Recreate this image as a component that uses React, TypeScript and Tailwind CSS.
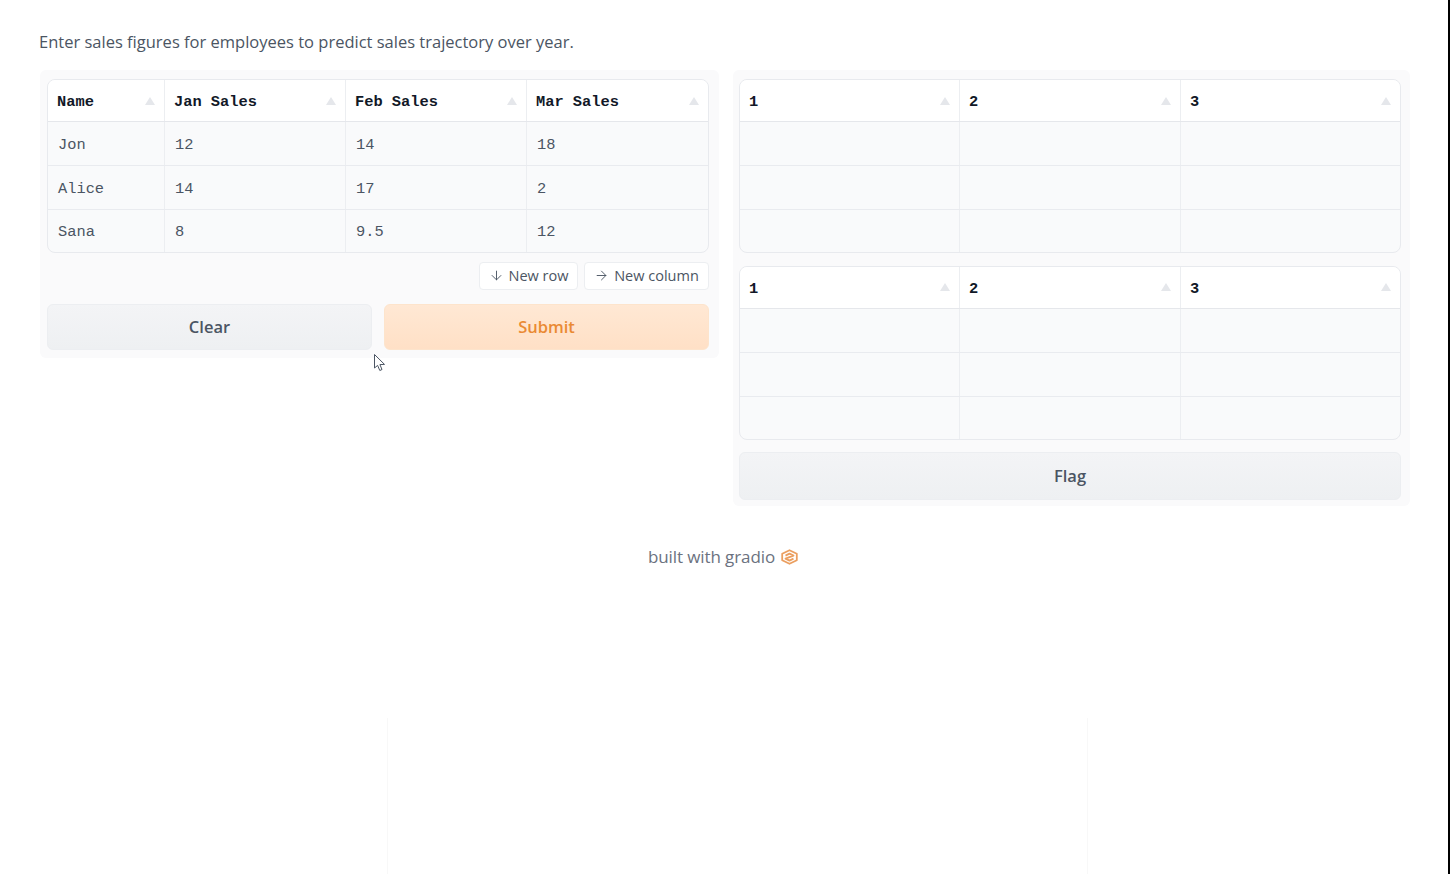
import { ArrowDown, ArrowRight } from 'lucide-react';

const mono = "font-['Liberation_Mono',monospace]";

function SortArrow() {
  return (
    <svg width="10" height="8" viewBox="0 0 10 8" className="shrink-0">
      <path d="M5 0 L10 8 L0 8 Z" fill="#e5e7eb" />
    </svg>
  );
}

function DataTable({ headers, rows, widths }: { headers: string[]; rows: string[][]; widths: string[] }) {
  return (
    <div className={`overflow-hidden rounded-lg border border-[#e8eaee] bg-[#f9fafb] text-[15.36px] ${mono}`}>
      <div className="flex h-[42px] border-b border-[#e5e7eb] bg-white">
        {headers.map((h, i) => (
          <div
            key={i}
            className={`flex items-center justify-between pl-[9px] pr-[9px] font-bold text-[#111827] ${widths[i]} ${i > 0 ? 'border-l border-[#eceef1]' : ''}`}
          >
            <span className="pt-[4px]">{h}</span>
            <SortArrow />
          </div>
        ))}
      </div>
      {rows.map((row, r) => (
        <div key={r} className={`flex h-[43.33px] ${r > 0 ? 'border-t border-[#e9ebef]' : ''}`}>
          {row.map((c, i) => (
            <div
              key={i}
              className={`flex items-center pl-[10px] pt-[4px] text-[#4b5563] ${widths[i]} ${i > 0 ? 'border-l border-[#eceef1]' : ''}`}
            >
              {c}
            </div>
          ))}
        </div>
      ))}
    </div>
  );
}

const emptyRows = [['', '', ''], ['', '', ''], ['', '', '']];
const rightWidths = ['w-[219px]', 'w-[221px]', 'flex-1'];
const leftWidths = ['w-[116px]', 'w-[181px]', 'w-[181px]', 'flex-1'];

export default function App() {
  return (
    <div className="relative flex h-[874px] overflow-hidden bg-white font-['Open_Sans',sans-serif]">
      <div className="flex-1">
        <div className="pl-[39px] pt-[31px] text-[16.5px] leading-[22px] text-[#4b5563]">
          <p>Enter sales figures for employees to predict sales trajectory over year.</p>
        </div>

        <div className="mt-[17px] flex items-start pl-[40px]">
          <div className="w-[679px] rounded-md bg-[#fafafb] pb-[8px] pl-[7px] pr-[10px] pt-[9px]">
            <DataTable
              headers={['Name', 'Jan Sales', 'Feb Sales', 'Mar Sales']}
              rows={[
                ['Jon', '12', '14', '18'],
                ['Alice', '14', '17', '2'],
                ['Sana', '8', '9.5', '12'],
              ]}
              widths={leftWidths}
            />
            <div className="mt-[9px] flex justify-end gap-[6px]">
              <button className="flex h-[28px] w-[99px] items-center justify-center gap-[5px] rounded border border-[#eceef1] bg-white text-[14.5px] text-[#4b5563]">
                <ArrowDown size={15} strokeWidth={1.5} /> New row
              </button>
              <button className="flex h-[28px] w-[125px] items-center justify-center gap-[5px] rounded border border-[#eceef1] bg-white text-[14.5px] text-[#4b5563]">
                <ArrowRight size={15} strokeWidth={1.5} /> New column
              </button>
            </div>
            <div className="mt-[14px] flex gap-[12px]">
              <button className="h-[46px] flex-1 rounded-md border border-[#eceef1] bg-gradient-to-b from-[#f3f4f6] to-[#eef0f2] text-[16.5px] font-semibold text-[#4b5563]">
                Clear
              </button>
              <button className="h-[46px] flex-1 rounded-md border border-[#fde4cc] bg-gradient-to-b from-[#ffe8d4] to-[#ffe0c6] text-[16.5px] font-semibold text-[#ea8a34]">
                Submit
              </button>
            </div>
          </div>

          <div className="ml-[14px] w-[677px] rounded-md bg-[#fafafb] pb-[6px] pl-[6px] pr-[9px] pt-[9px]">
            <DataTable headers={['1', '2', '3']} rows={emptyRows} widths={rightWidths} />
            <div className="mt-[13px]">
              <DataTable headers={['1', '2', '3']} rows={emptyRows} widths={rightWidths} />
            </div>
            <button className="mt-[12px] h-[48px] w-full rounded-md border border-[#eceef1] bg-gradient-to-b from-[#f3f4f6] to-[#eef0f2] text-[16.5px] font-semibold text-[#4b5563]">
              Flag
            </button>
          </div>
        </div>

        <div className="mt-[40px] flex items-center justify-center gap-[6px] pr-[2px] text-[17px] leading-[22px] tracking-[-0.1px] text-[#6b7280]">
          <span>built with gradio</span>
          <svg width="17" height="16" viewBox="0 0 17 16" fill="none" stroke="#eb9f60" strokeWidth="1.8" strokeLinejoin="round">
            <path d="M8.5 1.2 L15.8 4.8 L15.8 11.2 L8.5 14.8 L1.2 11.2 L1.2 4.8 Z" />
            <path d="M4.5 6.6 L8.5 4.6 L12.5 6.6 L4.5 9.6 L8.5 11.6 L12.5 9.6" />
          </svg>
        </div>
      </div>

      {/* black edge at the right of the capture */}
      <div className="w-[2px] shrink-0 bg-black" />

      {/* faint seams left in the capture */}
      <div className="absolute left-[387px] top-[718px] h-[156px] w-px bg-[#f8f8f8]" />
      <div className="absolute left-[1087px] top-[718px] h-[156px] w-px bg-[#f8f8f8]" />

      {/* mouse pointer caught in the shot */}
      <svg width="14" height="20" viewBox="0 0 14 20" className="absolute left-[374px] top-[354px]">
        <path d="M0.5 0.5 L0.5 14 L3.6 11.4 L5.8 16.5 L8 15.5 L5.9 10.6 L10.5 10.4 Z" fill="white" stroke="#4b5563" strokeWidth="1" strokeLinejoin="round" />
      </svg>
    </div>
  );
}
